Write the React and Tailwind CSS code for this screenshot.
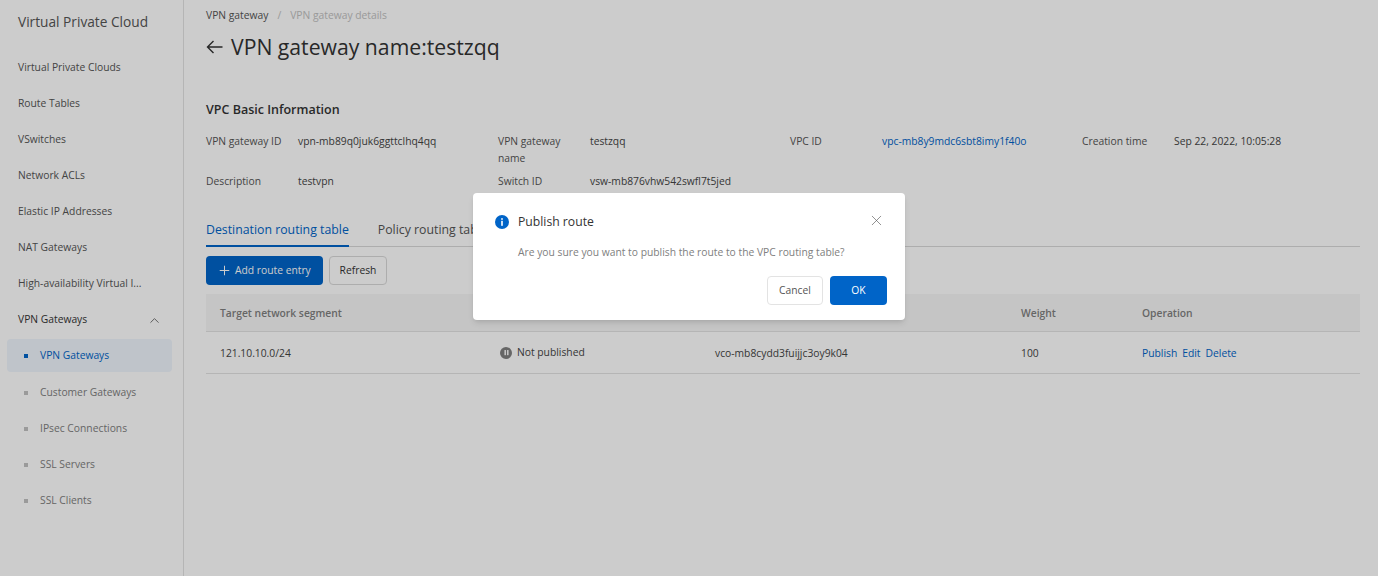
import React from "react";
import { ChevronUp, Plus, X, Pause } from "lucide-react";

const nav = ["Virtual Private Clouds","Route Tables","VSwitches","Network ACLs","Elastic IP Addresses","NAT Gateways","High-availability Virtual I..."];
const sub = ["Customer Gateways","IPsec Connections","SSL Servers","SSL Clients"];

function Field({ label, value, link }) {
  return (
    <div className="flex w-[292px] shrink-0">
      <div className="w-[92px] shrink-0 pr-3 leading-[17px] text-[#555]">{label}</div>
      <div className={`leading-[17px] ${link ? "text-[#0064c8]" : "text-[#444]"}`}>{value}</div>
    </div>
  );
}

export default function App() {
  return (
    <div className="relative flex h-[576px] w-full overflow-hidden bg-white font-['Open_Sans','Noto_Sans',sans-serif] text-[10.3px] text-[#333]">
      <aside className="w-[184px] shrink-0 border-r border-[#e3e3e3] bg-white">
        <div className="flex h-[44px] items-center pl-[18px] text-[13.7px] text-[#555]">Virtual Private Cloud</div>
        <div className="mt-[6px]">
          {nav.map((n) => (
            <div key={n} className="flex h-[36px] items-center pl-[18px] text-[#555]">{n}</div>
          ))}
          <div className="flex h-[36px] items-center justify-between pl-[18px] pr-[21px] font-medium text-[#333]">
            <span>VPN Gateways</span>
            <ChevronUp size={15} strokeWidth={1.3} className="text-[#555]" />
          </div>
          <div className="ml-[7px] mt-[1px] flex h-[33px] w-[165px] items-center rounded-sm bg-[#eff6fd] pl-[17px] font-medium text-[#0064c8]">
            <span className="mr-[12px] h-[4px] w-[4px] bg-[#0064c8]" />
            VPN Gateways
          </div>
          <div className="mt-[3px]">
            {sub.map((n) => (
              <div key={n} className="flex h-[36px] items-center pl-[24px] text-[#808080]">
                <span className="mr-[12px] h-[4px] w-[4px] bg-[#c1c1c1]" />
                {n}
              </div>
            ))}
          </div>
        </div>
      </aside>

      <main className="min-w-0 flex-1 pl-[22px] pr-[18px]">
        <div className="flex h-[32px] items-center text-[#555]">
          <span>VPN gateway</span>
          <span className="mx-[9px] text-[#c1c1c1]">/</span>
          <span className="text-[#c1c1c1]">VPN gateway details</span>
        </div>
        <div className="-mt-[3px] flex h-[36px] items-center text-[21.2px] font-medium text-[#333]">
          <svg width="17" height="16" viewBox="0 0 17 16" fill="none" stroke="currentColor" strokeWidth="1.4" className="mr-[8px]">
            <path d="M1.5 8H16.5M7.5 2L1.5 8L7.5 14" />
          </svg>
          VPN gateway name:testzqq
        </div>
        <div className="mt-[36px] text-[12.5px] font-semibold leading-[18px] text-[#333]">VPC Basic Information</div>
        <div className="mt-[14px] flex">
          <Field label="VPN gateway ID" value="vpn-mb89q0juk6ggttclhq4qq" />
          <Field label="VPN gateway name" value="testzqq" />
          <Field label="VPC ID" value="vpc-mb8y9mdc6sbt8imy1f40o" link />
          <Field label="Creation time" value="Sep 22, 2022, 10:05:28" />
        </div>
        <div className="mt-[6px] flex">
          <Field label="Description" value="testvpn" />
          <Field label="Switch ID" value="vsw-mb876vhw542swfl7t5jed" />
        </div>

        <div className="mt-[25px] flex h-[32px] border-b border-[#d9d9d9] text-[12.3px]">
          <div className="-mb-px flex h-[32px] items-center border-b-2 border-[#0064c8] font-medium text-[#0064c8]">Destination routing table</div>
          <div className="ml-[29px] flex h-[31px] items-center text-[#555]">Policy routing table</div>
        </div>

        <div className="mt-[9px] flex gap-[6px]">
          <button className="flex h-[29px] w-[117px] items-center gap-[3px] rounded-sm bg-[#0064c8] pl-[11px] text-white">
            <Plus size={15} strokeWidth={1.6} />
            Add route entry
          </button>
          <button className="h-[29px] w-[58px] rounded-sm border border-[#d9d9d9] bg-white text-[#333]">Refresh</button>
        </div>

        <div className="mt-[9px] grid h-[38px] grid-cols-[280px_215px_306px_121px_1fr] items-center border-b border-[#e3e3e3] bg-[#f7f7f7] pl-[14px] pt-[2px] font-semibold text-[#808080]">
          <div>Target network segment</div>
          <div>Status</div>
          <div>Next hop</div>
          <div>Weight</div>
          <div>Operation</div>
        </div>
        <div className="grid h-[42px] grid-cols-[280px_215px_306px_121px_1fr] items-center border-b border-[#e3e3e3] pl-[14px] pt-[2px] text-[#444]">
          <div>121.10.10.0/24</div>
          <div className="-mt-[2px] flex items-center gap-[5px]">
            <span className="flex h-[12px] w-[12px] items-center justify-center rounded-full bg-[#808080] text-white">
              <Pause size={7} fill="currentColor" strokeWidth={0} />
            </span>
            Not published
          </div>
          <div>vco-mb8cydd3fuijjc3oy9k04</div>
          <div>100</div>
          <div className="flex gap-[5px] text-[#0064c8]">
            <span>Publish</span><span>Edit</span><span>Delete</span>
          </div>
        </div>
      </main>

      <div className="absolute inset-0 bg-black/20" />

      <div className="absolute left-[473px] top-[193px] h-[127px] w-[432px] rounded-sm bg-white shadow-md">
        <div className="flex h-[58px] items-center justify-between pl-[22px] pr-[21px]">
          <div className="flex items-center gap-[9px] text-[12.2px] font-medium text-[#333]">
            <svg width="14" height="14" viewBox="0 0 14 14">
              <circle cx="7" cy="7" r="7" fill="#0064c8" />
              <rect x="6.2" y="5.8" width="1.6" height="5" fill="#fff" />
              <rect x="6.2" y="3.2" width="1.6" height="1.6" fill="#fff" />
            </svg>
            Publish route
          </div>
          <X size={17} strokeWidth={0.9} className="-mr-[1px] -mt-[3px] text-[#555]" />
        </div>
        <div className="-mt-[7px] pl-[45px] leading-[16px] text-[#808080]">Are you sure you want to publish the route to the VPC routing table?</div>
        <div className="mt-[16px] flex justify-end gap-[7px] pr-[18px]">
          <button className="h-[29px] w-[56px] rounded-sm border border-[#e3e3e3] bg-white text-[#555]">Cancel</button>
          <button className="h-[29px] w-[57px] rounded-sm bg-[#0064c8] text-white">OK</button>
        </div>
      </div>
    </div>
  );
}
